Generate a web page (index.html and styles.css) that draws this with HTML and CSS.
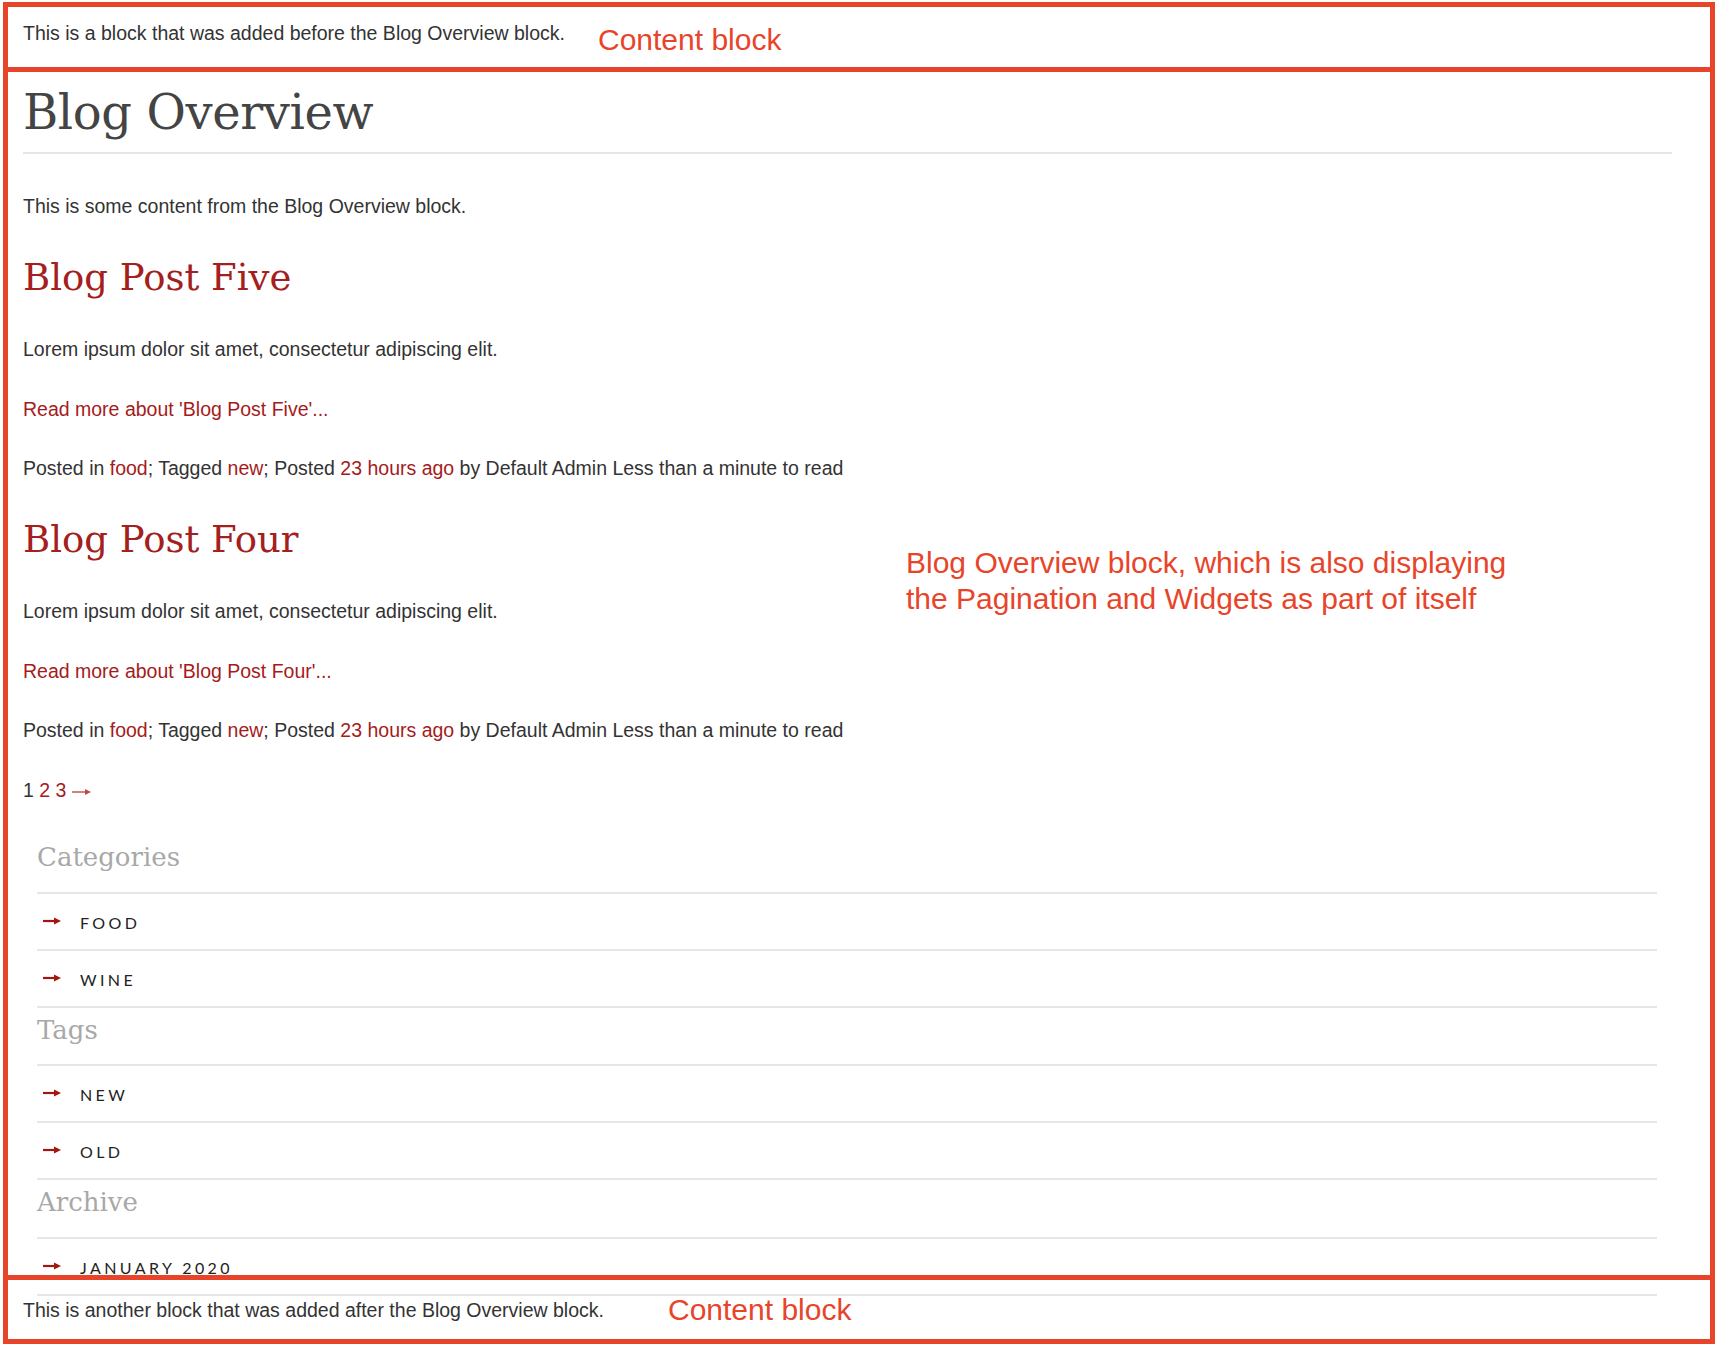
FILE: index.html
```
<!DOCTYPE html>
<html lang="en">
<head>
<meta charset="utf-8">
<title>Blog Overview</title>
<link rel="stylesheet" href="styles.css">
</head>
<body>
<main class="page">
  <p class="lead">This is a block that was added before the Blog Overview block.</p>
  <section class="blog">
    <h1 class="blog-title">Blog Overview</h1>
    <hr class="rule">
    <p>This is some content from the Blog Overview block.</p>

    <article class="post">
      <h2 class="post-title"><a href="#">Blog Post Five</a></h2>
      <p>Lorem ipsum dolor sit amet, consectetur adipiscing elit.</p>
      <p><a href="#">Read more about 'Blog Post Five'...</a></p>
      <p>Posted in <a href="#">food</a>; Tagged <a href="#">new</a>; Posted <a href="#">23 hours ago</a> by Default Admin Less than a minute to read</p>
    </article>

    <article class="post">
      <h2 class="post-title"><a href="#">Blog Post Four</a></h2>
      <p>Lorem ipsum dolor sit amet, consectetur adipiscing elit.</p>
      <p><a href="#">Read more about 'Blog Post Four'...</a></p>
      <p>Posted in <a href="#">food</a>; Tagged <a href="#">new</a>; Posted <a href="#">23 hours ago</a> by Default Admin Less than a minute to read</p>
    </article>

    <nav class="pager"><span>1</span> <a href="#">2</a> <a href="#">3</a> <a href="#" class="pager-next"><svg class="pager-arrow" viewBox="0 0 19 10" width="19" height="10"><path d="M0 5H15" stroke="currentColor" stroke-width="1.4"/><path d="M13 2L19 5L13 8Z" fill="currentColor"/></svg></a></nav>

    <aside class="widgets">
      <div class="widget">
        <h3 class="widget-title">Categories</h3>
        <ul class="widget-list">
          <li class="widget-item"><svg class="arrow" viewBox="0 0 18 10" width="18" height="10"><path d="M0 5H12" stroke="currentColor" stroke-width="2.2"/><path d="M11 1.5L18 5L11 8.5Z" fill="currentColor"/></svg><a href="#">Food</a></li>
          <li class="widget-item"><svg class="arrow" viewBox="0 0 18 10" width="18" height="10"><path d="M0 5H12" stroke="currentColor" stroke-width="2.2"/><path d="M11 1.5L18 5L11 8.5Z" fill="currentColor"/></svg><a href="#">Wine</a></li>
        </ul>
      </div>
      <div class="widget">
        <h3 class="widget-title">Tags</h3>
        <ul class="widget-list">
          <li class="widget-item"><svg class="arrow" viewBox="0 0 18 10" width="18" height="10"><path d="M0 5H12" stroke="currentColor" stroke-width="2.2"/><path d="M11 1.5L18 5L11 8.5Z" fill="currentColor"/></svg><a href="#">New</a></li>
          <li class="widget-item"><svg class="arrow" viewBox="0 0 18 10" width="18" height="10"><path d="M0 5H12" stroke="currentColor" stroke-width="2.2"/><path d="M11 1.5L18 5L11 8.5Z" fill="currentColor"/></svg><a href="#">Old</a></li>
        </ul>
      </div>
      <div class="widget">
        <h3 class="widget-title">Archive</h3>
        <ul class="widget-list">
          <li class="widget-item"><svg class="arrow" viewBox="0 0 18 10" width="18" height="10"><path d="M0 5H12" stroke="currentColor" stroke-width="2.2"/><path d="M11 1.5L18 5L11 8.5Z" fill="currentColor"/></svg><a href="#">January 2020</a></li>
        </ul>
      </div>
    </aside>
  </section>
  <p class="tail">This is another block that was added after the Blog Overview block.</p>
</main>

<div class="frame frame-top"><span class="note note-top">Content block</span></div>
<div class="frame frame-mid"><span class="note note-mid">Blog Overview block, which is also displaying<br>the Pagination and Widgets as part of itself</span></div>
<div class="frame frame-bot"><span class="note note-bot">Content block</span></div>
</body>
</html>
```
FILE: styles.css
```
html, body {
  margin: 0;
  padding: 0;
  background: #ffffff;
}

body {
  font-family: "Liberation Sans", Arial, sans-serif;
  font-size: 19.5px;
  line-height: 29px;
  color: #333333;
  position: relative;
  min-height: 1348px;
  overflow: hidden;
}

a {
  color: #a51b1b;
  text-decoration: none;
}

.page {
  padding: 19px 46px 0 23px;
}

p {
  margin: 0 0 30.5px;
}

.lead {
  margin: 0;
}

.blog-title {
  font-family: "DejaVu Serif", serif;
  font-weight: normal;
  font-size: 48px;
  line-height: 55px;
  letter-spacing: -0.4px;
  color: #444444;
  margin: 37px 0 12px;
}

.rule {
  border: 0;
  height: 2px;
  background: #e6e6e6;
  margin: 0 0 38px;
}

.post-title {
  font-family: "DejaVu Serif", serif;
  font-weight: normal;
  font-size: 37px;
  line-height: 44px;
  margin: 35px 0 35px;
}

.post-title a {
  color: #a3201d;
}

.pager {
  margin: 31px 0 30px;
}

.pager-next {
  color: #bf4a44;
}

.pager-arrow {
  vertical-align: 0;
}

.widgets {
  margin: 0 15px 0 14px;
}

.widget-title {
  font-family: "DejaVu Serif", serif;
  font-weight: normal;
  font-size: 26px;
  line-height: 31px;
  color: #a8a8a8;
  margin: 0;
  padding: 7px 0 18.5px;
  border-bottom: 2px solid #e6e6e6;
}

.widget-list {
  list-style: none;
  margin: 0;
  padding: 0;
}

.widget-item {
  display: flex;
  align-items: center;
  gap: 19px;
  padding: 19px 0 16px 6px;
  border-bottom: 2px solid #e6e6e6;
  font-family: Lato, "Open Sans", sans-serif;
  font-size: 16px;
  line-height: 20px;
  letter-spacing: 3.4px;
  text-transform: uppercase;
}

.widget-item a {
  color: #222222;
}

.arrow {
  color: #a5150f;
  flex: none;
  position: relative;
  top: -2px;
}

.tail {
  margin: 0;
}

/* annotation overlays */
.frame {
  position: absolute;
  left: 3px;
  width: 1712px;
  box-sizing: border-box;
  border: 5px solid #e8442a;
  pointer-events: none;
}

.frame-top {
  top: 2px;
  height: 70px;
}

.frame-mid {
  top: 67px;
  height: 1213px;
}

.frame-bot {
  top: 1275px;
  height: 69px;
}

.note {
  position: absolute;
  font-family: "Liberation Sans", Arial, sans-serif;
  font-size: 30px;
  line-height: 36px;
  color: #e8442a;
  white-space: nowrap;
}

.note-top {
  left: 590px;
  top: 15px;
}

.note-mid {
  left: 898px;
  top: 473px;
}

.note-bot {
  left: 660px;
  top: 12px;
}
```
